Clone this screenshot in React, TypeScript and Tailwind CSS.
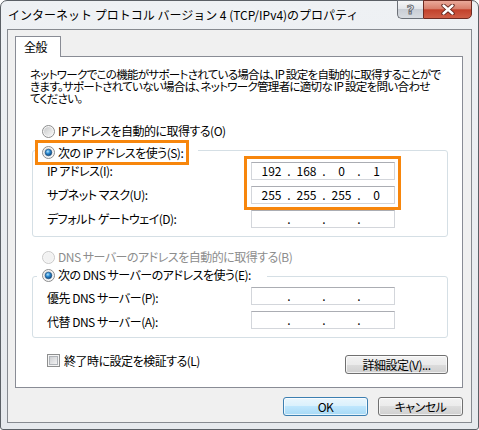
import React from "react";

const jp = "font-['Noto_Sans_CJK_JP',sans-serif]";
const palt = "[font-feature-settings:'palt']";

function Radio({ checked = false, disabled = false }: { checked?: boolean; disabled?: boolean }) {
  return (
    <svg width="13" height="13" viewBox="0 0 13 13" className="shrink-0">
      <defs>
        <linearGradient id="rb-ring" x1="0" y1="0" x2="1" y2="1">
          <stop offset="0" stopColor="#c9cacb" />
          <stop offset="1" stopColor="#f7f7f7" />
        </linearGradient>
        <radialGradient id="rb-dot" cx="0.4" cy="0.35" r="0.7">
          <stop offset="0" stopColor="#b5e6fc" />
          <stop offset="0.45" stopColor="#2b8ad2" />
          <stop offset="1" stopColor="#0a3c6e" />
        </radialGradient>
      </defs>
      <circle cx="6.5" cy="6.5" r="6" fill="#f6f6f6" stroke={disabled ? "#c9c9c9" : "#8b8c8d"} />
      <circle cx="6.5" cy="6.5" r="4.6" fill={disabled ? "#f2f2f2" : "url(#rb-ring)"} />
      {checked && <circle cx="6.5" cy="6.5" r="3.3" fill="url(#rb-dot)" stroke="#174e80" strokeWidth="0.6" />}
    </svg>
  );
}

function Check() {
  return (
    <svg width="13" height="13" viewBox="0 0 13 13" className="shrink-0">
      <defs>
        <linearGradient id="cb-in" x1="0" y1="0" x2="1" y2="1">
          <stop offset="0" stopColor="#cbcdd0" />
          <stop offset="1" stopColor="#f5f5f5" />
        </linearGradient>
      </defs>
      <rect x="0.5" y="0.5" width="12" height="12" fill="#f4f4f4" stroke="#8e8f8f" />
      <rect x="2.5" y="2.5" width="8" height="8" fill="url(#cb-in)" stroke="#b0b4b9" />
    </svg>
  );
}

function IpField({ parts }: { parts?: string[] }) {
  const v = parts ?? ["", "", "", ""];
  return (
    <div className="flex h-[18px] w-[144px] items-center border border-[#d3d6db] border-t-[#abadb3] bg-white pl-[4px] text-[12px] leading-none tracking-normal">
      {v.map((p, i) => (
        <React.Fragment key={i}>
          <span className="w-[31px] text-center">{p}</span>
          {i < 3 && <span className="w-[4px] text-center">.</span>}
        </React.Fragment>
      ))}
    </div>
  );
}

function Button({ children, isDefault = false, className = "" }: { children: React.ReactNode; isDefault?: boolean; className?: string }) {
  return (
    <div
      className={`flex items-center justify-center rounded-[3px] border text-[12px] leading-none shadow-[inset_0_0_0_1px_rgba(255,255,255,0.7)] ${
        isDefault
          ? "border-[#3c7fb1] bg-[linear-gradient(#eaf6fd_0%,#d9f0fc_50%,#bee6fd_50%,#a7d9f5_100%)]"
          : "border-[#707070] bg-[linear-gradient(#f2f2f2_0%,#ebebeb_50%,#dddddd_50%,#cfcfcf_100%)]"
      } ${className}`}
    >
      {children}
    </div>
  );
}

export default function App() {
  return (
    <div className={`h-[430px] w-[479px] bg-white text-black ${jp}`}>
      <div className="flex h-full w-full flex-col rounded-t-[7px] rounded-b-[3px] border border-[#5b6066] bg-[linear-gradient(#eef1f4,#e6e9ed)] px-[6px] pb-[6px]">
        {/* title bar */}
        <div className="flex h-[28px] items-start">
          <div className="whitespace-nowrap pl-[1px] pt-[6px] text-[12px] leading-[16px] [text-shadow:0_0_6px_#fff]">
            インターネット プロトコル バージョン 4 (TCP/IPv4)のプロパティ
          </div>
          <div className="-mt-px ml-auto flex">
            <div className="flex h-[19px] w-[26px] items-center justify-center rounded-bl-[5px] border border-r-0 border-[#6b7077] bg-[linear-gradient(#f6f7f8_0%,#e3e6ea_45%,#c9ced5_50%,#d8dce1_100%)]">
              <span className="font-['DejaVu_Sans',sans-serif] text-[13px] font-bold leading-none text-[#f4f4f4] [-webkit-text-stroke:1px_#6a6e74]">?</span>
            </div>
            <div className="flex h-[19px] w-[49px] items-center justify-center rounded-br-[5px] border border-[#6e2b22] bg-[linear-gradient(#eaa99a_0%,#d9806d_45%,#c2412b_52%,#cf5e46_100%)]">
              <svg width="14" height="11" viewBox="0 0 14 11">
                <path d="M2.5 1.5 L11.5 9.5 M11.5 1.5 L2.5 9.5" stroke="#5a1d15" strokeWidth="4.2" strokeLinecap="round" />
                <path d="M2.5 1.5 L11.5 9.5 M11.5 1.5 L2.5 9.5" stroke="#ffffff" strokeWidth="2.4" strokeLinecap="round" />
              </svg>
            </div>
          </div>
        </div>

        {/* client area */}
        <div className={`flex flex-1 flex-col border border-[#868a90] bg-[#f0f0f0] pl-[7px] pr-[8px] pt-[6px] tracking-[-0.5px] ${palt}`}>
          {/* tab */}
          <div className="relative z-10 -mb-px flex h-[21px] w-[46px] items-center border border-b-0 border-[#898c95] bg-white pl-[8px] text-[12px] leading-none">
            全般
          </div>

          {/* tab panel */}
          <div className="flex h-[332px] flex-col whitespace-nowrap border border-[#898c95] bg-white pl-[16px] pr-[14px] pt-[11px] text-[12px] leading-none">
            <p className="-ml-[2px] text-[11.5px] leading-[12px] tracking-[-0.7px]">
              ネットワークでこの機能がサポートされている場合は、IP 設定を自動的に取得することがで
              <br />
              きます。サポートされていない場合は、ネットワーク管理者に適切な IP 設定を問い合わせ
              <br />
              てください。
            </p>

            <div className="mt-[19px] flex h-[16px] items-center gap-[3px] pl-[10px]">
              <Radio />
              <span>IP アドレスを自動的に取得する(O)</span>
            </div>

            {/* static IP group */}
            <div className="mt-[1px]">
              <div className="relative z-10 flex">
                <div className="ml-[3px] bg-white pr-[9px]">
                  <div className="flex h-[25px] w-[154px] items-center gap-[3px] border-[3px] border-[#f7860c] pl-[4px]">
                    <Radio checked />
                    <span>次の IP アドレスを使う(S):</span>
                  </div>
                </div>
              </div>
              <div className="-mt-[15px] flex h-[87px] rounded-[3px] border border-[#d5dfe5]">
                <div className="flex w-[211px] flex-col pl-[14px] pt-[8px]">
                  <div className="flex h-[24px] items-center">IP アドレス(I):</div>
                  <div className="flex h-[24px] items-center">サブネット マスク(U):</div>
                  <div className="flex h-[24px] items-center">デフォルト ゲートウェイ(D):</div>
                </div>
                <div className="flex flex-col pt-[5px]">
                  <div className="flex flex-col gap-[6px] border-[3px] border-[#f7860c] py-[3px] pl-[4px] pr-[3px]">
                    <IpField parts={["192", "168", "0", "1"]} />
                    <IpField parts={["255", "255", "255", "0"]} />
                  </div>
                  <div className="ml-[7px]">
                    <IpField />
                  </div>
                </div>
              </div>
            </div>

            <div className="mt-[12px] flex h-[16px] items-center gap-[3px] pl-[10px] text-[#8d8d8d]">
              <Radio disabled />
              <span>DNS サーバーのアドレスを自動的に取得する(B)</span>
            </div>

            {/* DNS group */}
            <div className="mt-[2px]">
              <div className="relative z-10 flex">
                <div className="ml-[5px] flex h-[16px] w-[230px] items-center gap-[3px] bg-white pl-[5px]">
                  <Radio checked />
                  <span>次の DNS サーバーのアドレスを使う(E):</span>
                </div>
              </div>
              <div className="-mt-[7px] flex h-[62px] rounded-[3px] border border-[#d5dfe5]">
                <div className="flex w-[218px] flex-col gap-[6px] pl-[14px] pt-[12px]">
                  <div className="flex h-[18px] items-center">優先 DNS サーバー(P):</div>
                  <div className="flex h-[18px] items-center">代替 DNS サーバー(A):</div>
                </div>
                <div className="flex flex-col gap-[6px] pt-[10px]">
                  <IpField />
                  <IpField />
                </div>
              </div>
            </div>

            <div className="mt-[16px] flex items-start justify-between">
              <div className="flex h-[13px] items-center gap-[4px] pl-[15px]">
                <Check />
                <span>終了時に設定を検証する(L)</span>
              </div>
              <Button className="mt-[1px] h-[19px] w-[103px]">詳細設定(V)...</Button>
            </div>
          </div>

          {/* dialog buttons */}
          <div className="mt-[9px] flex justify-end gap-[10px]">
            <Button isDefault className="h-[19px] w-[85px]">OK</Button>
            <Button className="h-[19px] w-[85px]">キャンセル</Button>
          </div>
        </div>
      </div>
    </div>
  );
}
